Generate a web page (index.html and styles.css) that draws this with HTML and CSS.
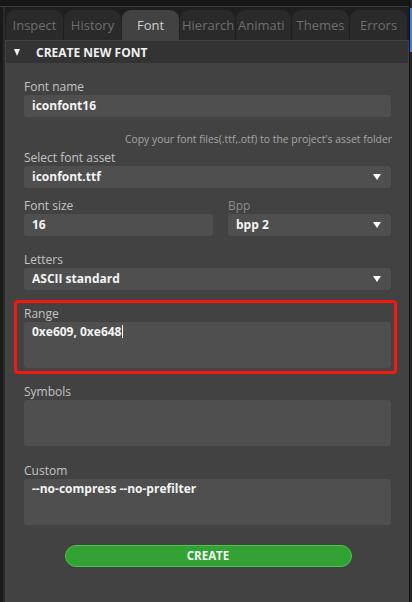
FILE: index.html
```html
<!DOCTYPE html>
<html>
<head>
<meta charset="utf-8">
<link rel="stylesheet" href="styles.css">
</head>
<body>
<div class="app">
  <div class="left-strip"></div>
  <div class="main">
    <div class="topband"></div>
    <div class="tabs">
      <div class="tab">Inspect</div>
      <div class="tab">History</div>
      <div class="tab active">Font</div>
      <div class="tab left">Hierarch</div>
      <div class="tab left">Animati</div>
      <div class="tab">Themes</div>
      <div class="tab">Errors</div>
    </div>
    <div class="panel">
      <div class="header"><span class="tri"></span><span class="title">CREATE NEW FONT</span></div>
      <div class="content">
        <div class="field">
          <div class="label">Font name</div>
          <div class="input">iconfont16</div>
        </div>
        <div class="hint">Copy your font files(.ttf,.otf) to the project's asset folder</div>
        <div class="field f-select">
          <div class="label">Select font asset</div>
          <div class="input select">iconfont.ttf<span class="arrow"></span></div>
        </div>
        <div class="row f-size">
          <div class="field">
            <div class="label">Font size</div>
            <div class="input">16</div>
          </div>
          <div class="field">
            <div class="label dim">Bpp</div>
            <div class="input select">bpp 2<span class="arrow"></span></div>
          </div>
        </div>
        <div class="field gap16">
          <div class="label">Letters</div>
          <div class="input select">ASCII standard<span class="arrow"></span></div>
        </div>
        <div class="field gap16 highlighted">
          <div class="label">Range</div>
          <div class="input area">0xe609, 0xe648<span class="caret"></span></div>
        </div>
        <div class="field gap16">
          <div class="label">Symbols</div>
          <div class="input area"></div>
        </div>
        <div class="field gap17">
          <div class="label">Custom</div>
          <div class="input area">--no-compress --no-prefilter</div>
        </div>
        <div class="btn-row"><button class="create">CREATE</button></div>
      </div>
    </div>
  </div>
  <div class="right-strip"><div class="blue"></div></div>
</div>
</body>
</html>
```
FILE: styles.css
```css
html, body {
  margin: 0;
  padding: 0;
  background: #1a1a1a;
  width: 412px;
  height: 602px;
  overflow: hidden;
  font-family: "Open Sans", "Noto Sans", sans-serif;
}
.app {
  display: flex;
  width: 412px;
  height: 602px;
}
.left-strip {
  width: 5px;
  flex: none;
  background: linear-gradient(to right, #1a1a1a 0 3px, #2b2b2b 3px 5px);
}
.main {
  width: 404px;
  flex: none;
  display: flex;
  flex-direction: column;
  background: #1f1f1f;
}
.topband {
  height: 6px;
  background: #161616;
  border-bottom: 1px solid #3a3a3a;
  margin-left: -5px;
  margin-right: -3px;
}
.tabs {
  display: flex;
  gap: 1px;
  margin-top: 3px;
  padding: 0 2px 0 1px;
  height: 30px;
}
.tab {
  flex: 1;
  min-width: 0;
  background: #2a2a2a;
  color: #6e6e6e;
  font-size: 13px;
  line-height: 30px;
  text-align: center;
  white-space: nowrap;
  overflow: hidden;
  padding: 0 3px;
  border-radius: 9px 9px 0 0;
}
.tab.left {
  text-align: left;
  padding: 0 2px;
}
.tab.active {
  background: #424242;
  color: #cfcfcf;
}
.panel {
  flex: 1;
  background: #424242;
  padding-top: 1px;
}
.header {
  display: flex;
  align-items: center;
  height: 22px;
  background: #333333;
  margin: 0 1px;
}
.tri {
  width: 0;
  height: 0;
  border-left: 3.5px solid transparent;
  border-right: 3.5px solid transparent;
  border-top: 7px solid #f2f2f2;
  margin-left: 8px;
  margin-right: 16px;
}
.title {
  color: #f0f0f0;
  font-weight: 700;
  font-size: 12px;
}
.content {
  padding: 16px 18px 0 19px;
}
.label {
  color: #c4c4c4;
  font-size: 12px;
  line-height: 16px;
}
.label.dim {
  color: #8c8c8c;
}
.input {
  position: relative;
  height: 22px;
  background: #4f4f4f;
  border-radius: 3px;
  color: #f4f4f4;
  font-weight: 700;
  font-size: 12px;
  line-height: 22px;
  padding: 0 8px;
  box-sizing: border-box;
}
.input.area {
  height: 46px;
  line-height: 16px;
  padding-top: 2px;
}
.arrow {
  position: absolute;
  right: 10px;
  top: 8px;
  width: 0;
  height: 0;
  border-left: 4px solid transparent;
  border-right: 4px solid transparent;
  border-top: 6px solid #ffffff;
}
.caret {
  display: inline-block;
  width: 1px;
  height: 13px;
  background: #ffffff;
  vertical-align: -2px;
  margin-left: 1px;
}
.hint {
  text-align: right;
  color: #a6a6a6;
  font-size: 10.4px;
  line-height: 14px;
  margin-top: 15px;
  margin-right: -1px;
}
.f-select {
  margin-top: 4px;
}
.row {
  display: grid;
  grid-template-columns: 189px 1fr;
  gap: 15px;
}
.f-size {
  margin-top: 10px;
}
.gap16 {
  margin-top: 16px;
}
.gap17 {
  margin-top: 17px;
}
.highlighted {
  position: relative;
}
.highlighted::after {
  content: "";
  position: absolute;
  top: -6px;
  bottom: -6px;
  left: -10px;
  right: -6px;
  border: 3px solid #f5180f;
  border-radius: 4px;
  pointer-events: none;
}
.btn-row {
  display: flex;
  justify-content: center;
  margin-top: 20px;
  padding-left: 1px;
}
.create {
  width: 287px;
  height: 22px;
  border-radius: 11px;
  border: 1px solid #4cc44c;
  background: #31a233;
  color: #f6f6f6;
  font-family: "Open Sans", "Noto Sans", sans-serif;
  font-weight: 700;
  font-size: 11.5px;
  padding: 0;
  line-height: 20px;
}
.right-strip {
  flex: 1;
  position: relative;
  background: #262626;
  border-left: 1px solid #0f0f0f;
}
.blue {
  position: absolute;
  top: 8px;
  height: 44px;
  left: 0;
  right: 0;
  background: #3f7fef;
}
```
